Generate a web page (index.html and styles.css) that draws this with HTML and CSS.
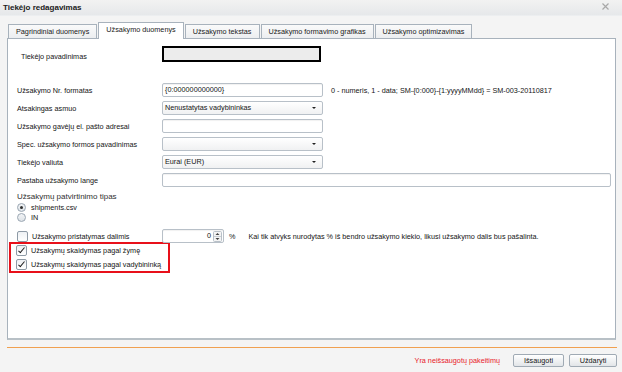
FILE: index.html
```html
<!DOCTYPE html>
<html lang="lt">
<head>
    <meta charset="UTF-8">
    <title>Tiekėjo redagavimas</title>
    <link rel="stylesheet" href="styles.css">
</head>
<body>
    <div class="window">
        <div class="titlebar">
            <span class="title">Tiekėjo redagavimas</span>
            <svg class="close" width="7" height="7" viewBox="0 0 7 7">
                <path d="M0.5 0.5 L6.5 6.5 M6.5 0.5 L0.5 6.5" stroke="#a8a8a8" stroke-width="1.2"/>
            </svg>
        </div>

        <div class="tabs">
            <div class="tab">Pagrindiniai duomenys</div>
            <div class="tab active">Užsakymo duomenys</div>
            <div class="tab">Užsakymo tekstas</div>
            <div class="tab">Užsakymo formavimo grafikas</div>
            <div class="tab">Užsakymo optimizavimas</div>
        </div>

        <div class="panel">
            <div class="row name-row">
                <label class="label">Tiekėjo pavadinimas</label>
                <div class="masked"></div>
            </div>

            <div class="rows">
                <div class="row">
                    <label class="label">Užsakymo Nr. formatas</label>
                    <div class="field">{0:000000000000}</div>
                    <span class="hint">0 - numeris, 1 - data; SM-{0:000}-{1:yyyyMMdd} = SM-003-20110817</span>
                </div>
                <div class="row">
                    <label class="label">Atsakingas asmuo</label>
                    <div class="field select">Nenustatytas vadybininkas<span class="arrow"></span></div>
                </div>
                <div class="row">
                    <label class="label">Užsakymo gavėjų el. pašto adresai</label>
                    <div class="field"></div>
                </div>
                <div class="row">
                    <label class="label">Spec. užsakymo formos pavadinimas</label>
                    <div class="field select"><span class="arrow"></span></div>
                </div>
                <div class="row">
                    <label class="label">Tiekėjo valiuta</label>
                    <div class="field select">Eurai (EUR)<span class="arrow"></span></div>
                </div>
                <div class="row">
                    <label class="label">Pastaba užsakymo lange</label>
                    <div class="field wide"></div>
                </div>
            </div>

            <div class="group">
                <div class="group-title">Užsakymų patvirtinimo tipas</div>
                <div class="radio-line"><span class="radio checked"></span>shipments.csv</div>
                <div class="radio-line"><span class="radio"></span>IN</div>
            </div>

            <div class="row part-row">
                <label class="label check-label"><span class="checkbox"></span>Užsakymo pristatymas dalimis</label>
                <div class="field spinner">
                    <span class="spin-value">0</span>
                    <span class="spin-buttons">
                        <svg width="9" height="11" viewBox="0 0 9 11">
                            <rect x="0.5" y="0.5" width="8" height="10" rx="1" fill="#f4f4f4" stroke="#b8c0c8"/>
                            <line x1="1" y1="5.5" x2="8" y2="5.5" stroke="#c8ced4"/>
                            <path d="M2.5 4 L4.5 2 L6.5 4 Z" fill="#404040"/>
                            <path d="M2.5 7 L4.5 9 L6.5 7 Z" fill="#404040"/>
                        </svg>
                    </span>
                </div>
                <span class="percent">%</span>
                <span class="hint part-hint">Kai tik atvyks nurodytas % iš bendro užsakymo kiekio, likusi užsakymo dalis bus pašalinta.</span>
            </div>

            <div class="highlight">
                <div class="check-line"><span class="checkbox checked"></span>Užsakymų skaidymas pagal žymę</div>
                <div class="check-line"><span class="checkbox checked"></span>Užsakymų skaidymas pagal vadybininką</div>
            </div>
        </div>

        <div class="footer">
            <span class="unsaved">Yra neišsaugotų pakeitimų</span>
            <button class="btn">Išsaugoti</button>
            <button class="btn">Uždaryti</button>
        </div>
    </div>
</body>
</html>
```

FILE: styles.css
```css
body {
    margin: 0;
    padding: 0;
    background-color: #f4f4f4;
    font-family: "Liberation Sans", Arial, sans-serif;
    font-size: 7.25px;
    color: #151515;
}
.window {
    width: 622px;
    height: 372px;
    overflow: hidden;
}
.titlebar {
    height: 15px;
    display: flex;
    align-items: center;
    justify-content: space-between;
    padding: 0 13px 0 3px;
    background: linear-gradient(#f2f2f2, #e6e8ea);
    border-bottom: 1px solid #eceef0;
}
.title {
    font-weight: bold;
    font-size: 8px;
    color: #202020;
}
.close {
    margin-top: -2px;
}
.tabs {
    display: flex;
    align-items: flex-end;
    height: 22px;
    padding-left: 8px;
}
.tab {
    height: 13px;
    line-height: 13px;
    padding: 0 7px;
    margin-right: 1px;
    border: 1px solid #a8b2bc;
    border-bottom: none;
    background: linear-gradient(#fafafa, #eceef0);
    color: #202020;
    white-space: nowrap;
}
.tab.active {
    height: 16px;
    line-height: 14px;
    background: #fff;
    position: relative;
    top: 1px;
    z-index: 1;
}
.panel {
    height: 292px;
    margin: 0 6px 0 7px;
    padding: 7px 0 0 1px;
    background: #fff;
    border: 1px solid #a8b2bc;
    border-bottom: 2px solid #b8c0c6;
}
.row {
    display: flex;
    align-items: center;
    height: 14px;
    padding-left: 8px;
}
.label {
    width: 145px;
    flex-shrink: 0;
}
.name-row {
    height: 16px;
    margin-bottom: 21px;
}
.name-row .label {
    padding-left: 4px;
    width: 141px;
    margin-top: 4px;
}
.masked {
    width: 155px;
    height: 12px;
    border: 2px solid #000;
    background: #ececec;
}
.rows .row {
    margin-bottom: 4px;
}
.field {
    position: relative;
    width: 157px;
    height: 12px;
    line-height: 12px;
    padding: 0 0 0 2px;
    border: 1px solid #b8c0c8;
    border-radius: 2px;
    background: #fff;
    box-shadow: inset 0 1px 1px rgba(0, 0, 0, 0.06);
    white-space: nowrap;
}
.field.select {
    background: linear-gradient(#ffffff, #f0f1f2);
    box-shadow: none;
}
.field.wide {
    width: 445px;
}
.arrow {
    position: absolute;
    right: 6px;
    top: 5px;
    border-left: 2px solid transparent;
    border-right: 2px solid transparent;
    border-top: 2px solid #202020;
}
.hint {
    margin-left: 8px;
    white-space: nowrap;
}
.group {
    margin-top: 1px;
    padding-left: 8px;
}
.group-title {
    font-size: 8px;
    height: 11px;
    line-height: 11px;
    color: #303030;
}
.radio-line {
    display: flex;
    align-items: center;
    height: 10px;
}
.radio {
    width: 7px;
    height: 7px;
    margin-right: 5px;
    border: 1px solid #9aa6b2;
    border-radius: 50%;
    background: linear-gradient(#f2f4f6, #dde2e7);
    position: relative;
}
.radio.checked::after {
    content: "";
    position: absolute;
    left: 2px;
    top: 2px;
    width: 3px;
    height: 3px;
    border-radius: 50%;
    background: #303030;
}
.part-row {
    margin-top: 7px;
}
.check-label {
    display: flex;
    align-items: center;
}
.checkbox {
    width: 9px;
    height: 9px;
    margin-right: 4px;
    border: 1px solid #8e9aa6;
    border-radius: 2px;
    background: linear-gradient(#eef1f4, #ffffff);
    position: relative;
    flex-shrink: 0;
}
.checkbox.checked::after {
    content: "";
    position: absolute;
    left: 3px;
    top: 0px;
    width: 2px;
    height: 6px;
    border-right: 1.2px solid #202020;
    border-bottom: 1.2px solid #202020;
    transform: rotate(40deg);
}
.spinner {
    width: 60px;
    display: flex;
    justify-content: flex-end;
    align-items: center;
    padding: 0;
}
.spin-value {
    margin-right: 2px;
}
.spin-buttons {
    display: flex;
    margin-right: 1px;
}
.percent {
    margin-left: 5px;
}
.part-hint {
    margin-left: 13px;
}
.highlight {
    width: 152px;
    margin-top: -1px;
    padding-left: 5px;
    border: 2px solid #e8101a;
}
.check-line {
    display: flex;
    align-items: center;
    height: 13px;
}
.check-line + .check-line {
    height: 14px;
}
.footer {
    display: flex;
    align-items: center;
    justify-content: flex-end;
    margin: 7px 5px 0 7px;
    padding-top: 6px;
    border-top: 1px solid #f0a050;
}
.unsaved {
    color: #e8202a;
    margin-right: 8px;
}
.btn {
    height: 13px;
    padding: 0;
    margin-left: 5px;
    width: 51px;
    font-family: "Liberation Sans", Arial, sans-serif;
    font-size: 7.25px;
    color: #151515;
    border: 1px solid #a0aab4;
    border-radius: 2px;
    background: linear-gradient(#ffffff, #e2e5e8);
}
.btn:last-child {
    width: 48px;
}
```
